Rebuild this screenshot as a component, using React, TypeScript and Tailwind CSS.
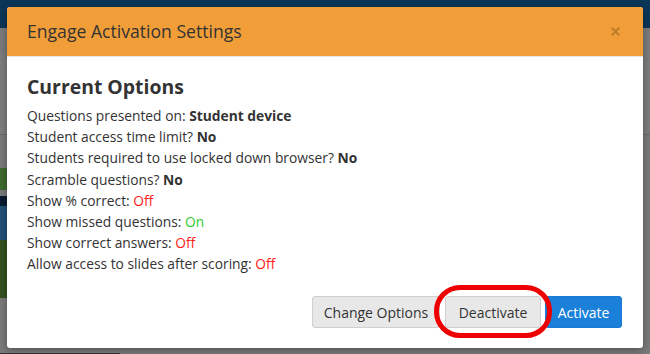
import { X } from "lucide-react";

const rows: { label: string; value: string; tone: "bold" | "off" | "on" }[] = [
  { label: "Questions presented on:", value: "Student device", tone: "bold" },
  { label: "Student access time limit?", value: "No", tone: "bold" },
  { label: "Students required to use locked down browser?", value: "No", tone: "bold" },
  { label: "Scramble questions?", value: "No", tone: "bold" },
  { label: "Show % correct:", value: "Off", tone: "off" },
  { label: "Show missed questions:", value: "On", tone: "on" },
  { label: "Show correct answers:", value: "Off", tone: "off" },
  { label: "Allow access to slides after scoring:", value: "Off", tone: "off" },
];

function Backdrop() {
  // dimmed page behind the modal
  return (
    <div className="flex h-full w-full flex-col bg-[#7a7a7a]">
      <div className="h-[28px] bg-[#0b3658]" />
      <div className="flex flex-1">
        <div className="flex w-[120px] flex-col">
          <div className="h-[26px] bg-[#7c7c7c]" />
          <div className="h-[81px] border-b border-[#6a6a6a] bg-[#7e7e7e]" />
          <div className="h-[33px]" />
          <div className="h-[22px] bg-[#3f6b30]" />
          <div className="h-[6px]" />
          <div className="h-[10px] bg-[#0a1a30]" />
          <div className="h-[34px] bg-[#23517a]" />
          <div className="h-[58px] bg-[#34521f]" />
          <div className="flex-1 border-b border-[#333]" />
        </div>
        <div className="flex flex-1 flex-col">
          <div className="h-[107px] border-b border-[#6c6c6c] bg-[#7d7d7d]" />
          <div className="flex-1" />
        </div>
      </div>
    </div>
  );
}

export default function App() {
  return (
    <div className="relative h-[354px] w-[650px] overflow-hidden font-['Open_Sans',sans-serif]">
      <Backdrop />

      <div className="absolute left-[7px] top-[7px] flex h-[341px] w-[636px] flex-col overflow-hidden rounded-[3px] bg-white shadow-[0_2px_8px_rgba(0,0,0,0.35)]">
        <div className="flex h-[50px] items-center justify-between border-b border-[#e5e5e5] bg-[#f19e38] pl-[20px] pr-[21px]">
          <h2 className="text-[17.6px] text-[#333]">Engage Activation Settings</h2>
          <X className="h-[13px] w-[13px] text-[#c07a30]" strokeWidth={3.4} />
        </div>

        <div className="flex flex-1 flex-col px-[20px] pt-[17px]">
          <h3 className="mb-[5px] text-[19.4px] font-bold leading-[26px] text-[#333]">Current Options</h3>
          <div className="flex flex-col text-[13.8px] leading-[21.2px] text-[#333]">
            {rows.map((r) => (
              <div key={r.label}>
                {r.label}{" "}
                <span
                  className={
                    r.tone === "bold"
                      ? "font-bold"
                      : r.tone === "off"
                        ? "text-[#ff1a1a]"
                        : "text-[#2fcc2f]"
                  }
                >
                  {r.value}
                </span>
              </div>
            ))}
          </div>

          <div className="mt-auto mb-[20px] mr-[1px] flex justify-end">
            <button className="h-[32px] w-[128px] rounded-[3px] border border-[#cfcfcf] bg-[#e8e8e8] text-[14px] text-[#333]">
              Change Options
            </button>
            <div className="relative ml-[5px]">
              <button className="h-[32px] w-[96px] rounded-[3px] border border-[#cfcfcf] bg-[#e8e8e8] text-[14px] text-[#333]">
                Deactivate
              </button>
              <div className="pointer-events-none absolute -left-[11px] -right-[11px] -top-[11px] -bottom-[10px] rounded-[26px] border-[5px] border-[#ee0000]" />
            </div>
            <button className="ml-[4px] h-[32px] w-[77px] rounded-[3px] border border-[#1a7ad4] bg-[#1a80da] text-[14px] text-white">
              Activate
            </button>
          </div>
        </div>
      </div>
    </div>
  );
}
